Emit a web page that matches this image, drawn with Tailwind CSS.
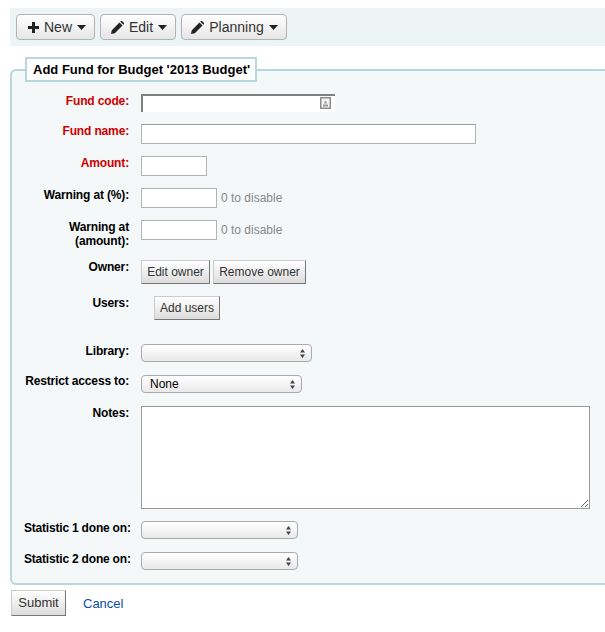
<!DOCTYPE html>
<html lang="en">
<head>
  <meta charset="UTF-8" />
  <title>Add Fund</title>
  <script src="https://cdn.jsdelivr.net/npm/@tailwindcss/browser@4"></script>
</head>
<body class="bg-white h-[632px] overflow-hidden font-['Liberation_Sans',Arial,sans-serif] text-xs text-black">
  <!-- toolbar -->
  <div class="ml-[10px] mt-2 h-[38px] bg-[#edf4f6] flex items-start gap-[5px] pl-[6px] pt-[6px]">
    <button class="h-[26px] w-[79px] flex items-center justify-center gap-[5px] rounded-[4px] border border-[#b3b3b3] bg-gradient-to-b from-white to-[#e6e6e6] pl-[3px] text-sm text-[#333]">
      <svg width="11" height="11" viewBox="0 0 11 11"><path d="M4 0h3v4h4v3H7v4H4V7H0V4h4z" fill="#222"/></svg>
      <span>New</span>
      <svg width="9" height="5" viewBox="0 0 9 5"><path d="M0 0h9L4.500 5z" fill="#222"/></svg>
    </button>
    <button class="h-[26px] w-[76px] flex items-center justify-center gap-[5px] rounded-[4px] border border-[#b3b3b3] bg-gradient-to-b from-white to-[#e6e6e6] pl-[2px] text-sm text-[#333]">
      <svg width="13" height="13" viewBox="0 0 13 13"><path d="M0 13l.8-3.800L8.500 1.500l3 3-7.700 7.700zM9.300.7l.7-.7h1l2 2v1l-.7.700z" fill="#222"/></svg>
      <span>Edit</span>
      <svg width="9" height="5" viewBox="0 0 9 5"><path d="M0 0h9L4.500 5z" fill="#222"/></svg>
    </button>
    <button class="h-[26px] w-[106px] flex items-center justify-center gap-[5px] rounded-[4px] border border-[#b3b3b3] bg-gradient-to-b from-white to-[#e6e6e6] pl-[1px] text-sm text-[#333]">
      <svg width="13" height="13" viewBox="0 0 13 13"><path d="M0 13l.8-3.800L8.500 1.500l3 3-7.700 7.700zM9.300.7l.7-.7h1l2 2v1l-.7.700z" fill="#222"/></svg>
      <span>Planning</span>
      <svg width="9" height="5" viewBox="0 0 9 5"><path d="M0 0h9L4.500 5z" fill="#222"/></svg>
    </button>
  </div>

  <form class="ml-[10px] mt-[11px]">
    <!-- fieldset runs off the right edge of the window -->
    <fieldset class="w-[610px] h-[528px] border-2 border-[#b9d8d9] rounded-[6px] bg-[#f4f8f9] pl-3 pt-3">
      <legend class="ml-px h-[25px] w-[232px] border-2 border-[#b9d8d9] bg-white pl-[6px] text-[13px] leading-[21px] font-bold">Add Fund for Budget '2013 Budget'</legend>

      <div class="flex flex-col gap-3">
        <div class="flex gap-3 h-[18px]">
          <label class="w-[105px] shrink-0 text-right tracking-[-0.15px] leading-[15px] font-bold text-[#cc0000]">Fund code:</label>
          <div class="relative w-[194px] h-[18px] bg-white border-t-2 border-l-2 border-[#808080]">
            <svg class="absolute right-[4px] top-[1px]" width="11" height="12" viewBox="0 0 11 12"><rect x=".75" y=".75" width="9.500" height="10.500" fill="#f4f4f4" stroke="#8c8c8c" stroke-width="1.500"/><path d="M5.500 3l1.500 3.500H4zM3 7.500h5V9.500H3z" fill="#999"/></svg>
          </div>
        </div>
        <div class="flex gap-3 h-5">
          <label class="w-[105px] shrink-0 text-right tracking-[-0.15px] leading-[15px] font-bold text-[#cc0000]">Fund name:</label>
          <input type="text" class="w-[335px] h-5 bg-white border border-[#b3b3b3] border-t-[#a0a0a0]" />
        </div>
        <div class="flex gap-3 h-5">
          <label class="w-[105px] shrink-0 text-right tracking-[-0.15px] leading-[15px] font-bold text-[#cc0000]">Amount:</label>
          <input type="text" class="w-[66px] h-5 bg-white border border-[#b3b3b3]" />
        </div>
        <div class="flex gap-3 h-5">
          <label class="w-[105px] shrink-0 text-right tracking-[-0.15px] leading-[15px] font-bold">Warning at (%):</label>
          <input type="text" class="w-[76px] h-5 bg-white border border-[#b3b3b3]" />
          <span class="-ml-2 leading-5 text-[#888]">0 to disable</span>
        </div>
        <div class="flex gap-3 h-7">
          <label class="w-[105px] shrink-0 text-right tracking-[-0.15px] leading-[14px] font-bold">Warning at (amount):</label>
          <input type="text" class="w-[76px] h-5 bg-white border border-[#b3b3b3]" />
          <span class="-ml-2 leading-5 text-[#888]">0 to disable</span>
        </div>
        <div class="flex gap-3 h-6">
          <label class="w-[105px] shrink-0 text-right tracking-[-0.15px] leading-[15px] font-bold">Owner:</label>
          <div class="flex gap-[3px]">
            <button type="button" class="w-[69px] h-6 border border-[#ccc] border-r-[#777] border-b-[#777] bg-gradient-to-b from-white to-[#ddd] text-[#333]">Edit owner</button>
            <button type="button" class="w-[93px] h-6 border border-[#ccc] border-r-[#777] border-b-[#777] bg-gradient-to-b from-white to-[#ddd] text-[#333]">Remove owner</button>
          </div>
        </div>
        <div class="flex gap-3 h-6 mb-3">
          <label class="w-[105px] shrink-0 text-right tracking-[-0.15px] leading-[15px] font-bold">Users:</label>
          <button type="button" class="ml-[13px] w-[66px] h-6 border border-[#ccc] border-r-[#777] border-b-[#777] bg-gradient-to-b from-white to-[#ddd] text-[#333]">Add users</button>
        </div>
        <div class="flex gap-3 h-[19px]">
          <label class="w-[105px] shrink-0 text-right tracking-[-0.15px] leading-[15px] font-bold">Library:</label>
          <div class="relative w-[171px] h-[18px]">
            <select class="appearance-none w-full h-full rounded-[4px] border border-[#aaa] bg-gradient-to-b from-white to-[#e9e9e9] pl-2"><option></option></select>
            <svg class="absolute right-[7px] top-[5px]" width="5" height="9" viewBox="0 0 5 9"><path d="M2.500 0L5 3.500H0zM2.500 9L0 5.500h5z" fill="#444"/></svg>
          </div>
        </div>
        <div class="flex gap-3 h-[19px]">
          <label class="w-[105px] shrink-0 text-right whitespace-nowrap tracking-[-0.15px] leading-[13px] font-bold">Restrict access to:</label>
          <div class="relative w-[161px] h-[18px]">
            <select class="appearance-none w-full h-full rounded-[4px] border border-[#aaa] bg-gradient-to-b from-white to-[#e9e9e9] pl-2 text-xs text-black"><option>None</option></select>
            <svg class="absolute right-[7px] top-[5px]" width="5" height="9" viewBox="0 0 5 9"><path d="M2.500 0L5 3.500H0zM2.500 9L0 5.500h5z" fill="#444"/></svg>
          </div>
        </div>
        <div class="flex gap-3 h-[103px]">
          <label class="w-[105px] shrink-0 text-right tracking-[-0.15px] leading-[15px] font-bold">Notes:</label>
          <textarea class="w-[449px] h-[103px] bg-white border border-[#999]"></textarea>
        </div>
        <div class="flex gap-3 h-[19px]">
          <label class="w-[105px] shrink-0 text-right whitespace-nowrap tracking-[-0.2px] leading-[15px] font-bold">Statistic 1 done on:</label>
          <div class="relative w-[157px] h-[18px]">
            <select class="appearance-none w-full h-full rounded-[4px] border border-[#aaa] bg-gradient-to-b from-white to-[#e9e9e9] pl-2"><option></option></select>
            <svg class="absolute right-[7px] top-[5px]" width="5" height="9" viewBox="0 0 5 9"><path d="M2.500 0L5 3.500H0zM2.500 9L0 5.500h5z" fill="#444"/></svg>
          </div>
        </div>
        <div class="flex gap-3 h-[18px]">
          <label class="w-[105px] shrink-0 text-right whitespace-nowrap tracking-[-0.2px] leading-[15px] font-bold">Statistic 2 done on:</label>
          <div class="relative w-[157px] h-[18px]">
            <select class="appearance-none w-full h-full rounded-[4px] border border-[#aaa] bg-gradient-to-b from-white to-[#e9e9e9] pl-2"><option></option></select>
            <svg class="absolute right-[7px] top-[5px]" width="5" height="9" viewBox="0 0 5 9"><path d="M2.500 0L5 3.500H0zM2.500 9L0 5.500h5z" fill="#444"/></svg>
          </div>
        </div>
      </div>
    </fieldset>

    <div class="flex items-center mt-[5px] ml-px gap-[17px]">
      <button type="submit" class="w-[55px] h-[26px] border border-[#ccc] border-r-[#777] border-b-[#777] bg-gradient-to-b from-white to-[#ddd] text-[13px] text-[#333]">Submit</button>
      <a href="#" class="pt-px text-[13px] text-[#0b4ea2]">Cancel</a>
    </div>
  </form>
</body>
</html>
